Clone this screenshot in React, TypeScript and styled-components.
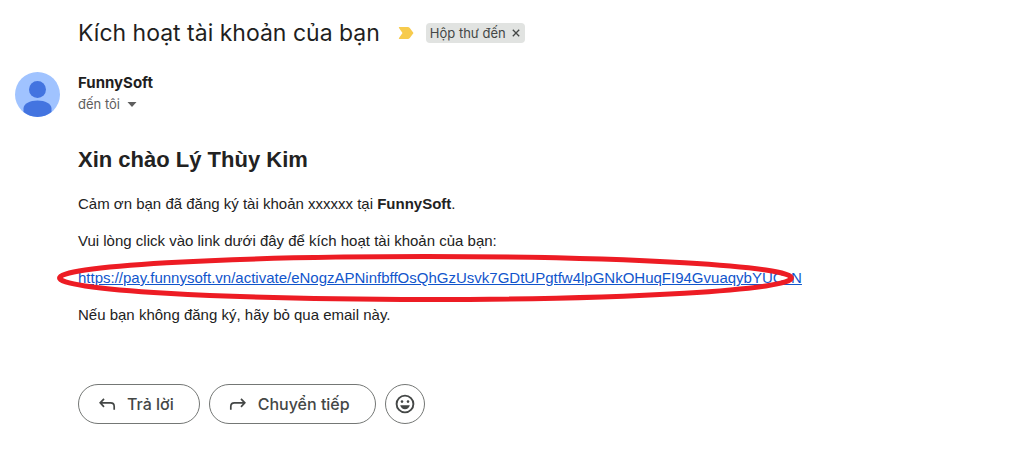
import React from 'react';
import styled, { createGlobalStyle } from 'styled-components';

const GlobalStyle = createGlobalStyle`
  * { box-sizing: border-box; }
  body { margin: 0; background: #fff; color: #1f1f1f; font-family: Inter, sans-serif; }
`;

const Page = styled.main`
  padding: 16px 16px 24px 78px;
`;

const SubjectRow = styled.header`
  display: flex;
  align-items: center;
  height: 34px;
`;

const Subject = styled.h1`
  margin: 0;
  font-size: 23px;
  line-height: 34px;
  font-weight: 400;
  white-space: nowrap;
`;

const Marker = styled.svg`
  flex: none;
  width: 16px;
  height: 12px;
  margin: 0 12px 0 18px;
`;

const Label = styled.span`
  display: flex;
  align-items: center;
  gap: 4px;
  height: 20px;
  padding: 0 3px 0 4px;
  border-radius: 4px;
  background: #e1e3e1;
  color: #444746;
  font-size: 13px;
  line-height: 20px;
  white-space: nowrap;
`;

const RemoveLabel = styled.button`
  display: flex;
  padding: 0;
  border: 0;
  background: none;
  color: inherit;
`;

const Sender = styled.section`
  display: flex;
  gap: 18px;
  margin: 22px 0 0 -63px;
`;

const Avatar = styled.svg`
  flex: none;
  width: 45px;
  height: 45px;
`;

const SenderName = styled.div`
  font-size: 15px;
  line-height: 22px;
  font-weight: 700;
`;

const Recipient = styled.button`
  display: flex;
  align-items: center;
  gap: 7px;
  padding: 0;
  border: 0;
  background: none;
  color: #5e5e5e;
  font: 13px/20px Inter, sans-serif;
`;

const Message = styled.article`
  margin-top: 30px;
  color: #222;
  font: 15px/22px "Liberation Sans", Arial, sans-serif;
`;

const Greeting = styled.h2`
  margin: 0 0 20px;
  font-size: 22px;
  line-height: 26px;
`;

const Paragraph = styled.p`
  margin: 0 0 15px;
`;

const LinkLine = styled(Paragraph)`
  position: relative;
  width: max-content;
`;

const ActivationLink = styled.a`
  color: #15c;
  text-decoration: underline;
`;

const Highlight = styled.svg`
  position: absolute;
  left: -21px;
  top: -13px;
  width: 737px;
  height: 48px;
  pointer-events: none;
`;

const Actions = styled.footer`
  display: flex;
  gap: 9px;
  margin-top: 58px;
`;

const Action = styled.button<{ $round?: boolean }>`
  display: flex;
  align-items: center;
  justify-content: center;
  gap: 10px;
  height: 40px;
  width: ${p => (p.$round ? '40px' : 'auto')};
  padding: ${p => (p.$round ? '0' : '0 25px 0 18px')};
  border: 1px solid #747775;
  border-radius: 20px;
  background: #fff;
  color: #444746;
  font: 500 16px/20px Inter, sans-serif;
  white-space: nowrap;
`;

export default function App() {
  return (
    <>
      <GlobalStyle />
      <Page>
        <SubjectRow>
          <Subject>Kích hoạt tài khoản của bạn</Subject>
          <Marker viewBox="0 0 16 12" aria-hidden="true">
            <path d="M1.5 0H9.8Q11 0 11.8 1L15.5 6L11.8 11Q11 12 9.8 12H1.5Q.3 12 1 11L4.5 6L1 1Q.3 0 1.5 0Z" fill="#f7cb4d" />
          </Marker>
          <Label>
            Hộp thư đến
            <RemoveLabel aria-label="Xóa nhãn">
              <svg width="12" height="12" viewBox="0 0 12 12" fill="none" stroke="currentColor" strokeWidth="1.3">
                <path d="M2.8 2.8L9.2 9.2M9.2 2.8L2.8 9.2" />
              </svg>
            </RemoveLabel>
          </Label>
        </SubjectRow>

        <Sender>
          <Avatar viewBox="0 0 45 45" aria-hidden="true">
            <circle cx="22.5" cy="22.5" r="22.5" fill="#a0c3ff" />
            <circle cx="22.5" cy="17.5" r="8.5" fill="#4374e0" />
            <path d="M8.5 40V36.5C8.5 31.5 15 28.5 22.5 28.5S36.5 31.5 36.5 36.5V40A22.5 22.5 0 0 1 8.5 40Z" fill="#4374e0" />
          </Avatar>
          <div>
            <SenderName>FunnySoft</SenderName>
            <Recipient>
              đến tôi
              <svg width="10" height="6" viewBox="0 0 10 6" aria-hidden="true">
                <path d="M.5 1H9.5L5 6Z" fill="#5e5e5e" />
              </svg>
            </Recipient>
          </div>
        </Sender>

        <Message>
          <Greeting>Xin chào Lý Thùy Kim</Greeting>
          <Paragraph>
            Cảm ơn bạn đã đăng ký tài khoản xxxxxx tại <strong>FunnySoft</strong>.
          </Paragraph>
          <Paragraph>Vui lòng click vào link dưới đây để kích hoạt tài khoản của bạn:</Paragraph>
          <LinkLine>
            <ActivationLink href="#activate">
              https://pay.funnysoft.vn/activate/eNogzAPNinfbffOsQhGzUsvk7GDtUPgtfw4lpGNkOHuqFI94GvuaqybYUCJN
            </ActivationLink>
            <Highlight viewBox="0 0 737 48" aria-hidden="true">
              <ellipse cx="368.5" cy="24" rx="366" ry="21.5" fill="none" stroke="#ed1c24" strokeWidth="5" />
            </Highlight>
          </LinkLine>
          <Paragraph>Nếu bạn không đăng ký, hãy bỏ qua email này.</Paragraph>
        </Message>

        <Actions>
          <Action>
            <svg width="20" height="20" viewBox="0 0 20 20" fill="none" stroke="currentColor" strokeWidth="1.7" aria-hidden="true">
              <path d="M7 4.8L3.2 8.8L7 12.8M3.2 8.8H13.6Q17.2 8.8 17.2 12.4V15.8" />
            </svg>
            Trả lời
          </Action>
          <Action>
            <svg width="20" height="20" viewBox="0 0 20 20" fill="none" stroke="currentColor" strokeWidth="1.7" aria-hidden="true">
              <path d="M13 4.8L16.8 8.8L13 12.8M16.8 8.8H6.4Q2.8 8.8 2.8 12.4V15.8" />
            </svg>
            Chuyển tiếp
          </Action>
          <Action $round aria-label="Thêm biểu tượng cảm xúc">
            <svg width="20" height="20" viewBox="0 0 20 20" aria-hidden="true">
              <circle cx="10" cy="10" r="8.4" fill="none" stroke="currentColor" strokeWidth="1.9" />
              <circle cx="7" cy="7.6" r="1.3" fill="currentColor" />
              <circle cx="13" cy="7.6" r="1.3" fill="currentColor" />
              <path d="M5.2 11.2H14.8Q13.6 15.2 10 15.2T5.2 11.2Z" fill="currentColor" />
            </svg>
          </Action>
        </Actions>
      </Page>
    </>
  );
}
